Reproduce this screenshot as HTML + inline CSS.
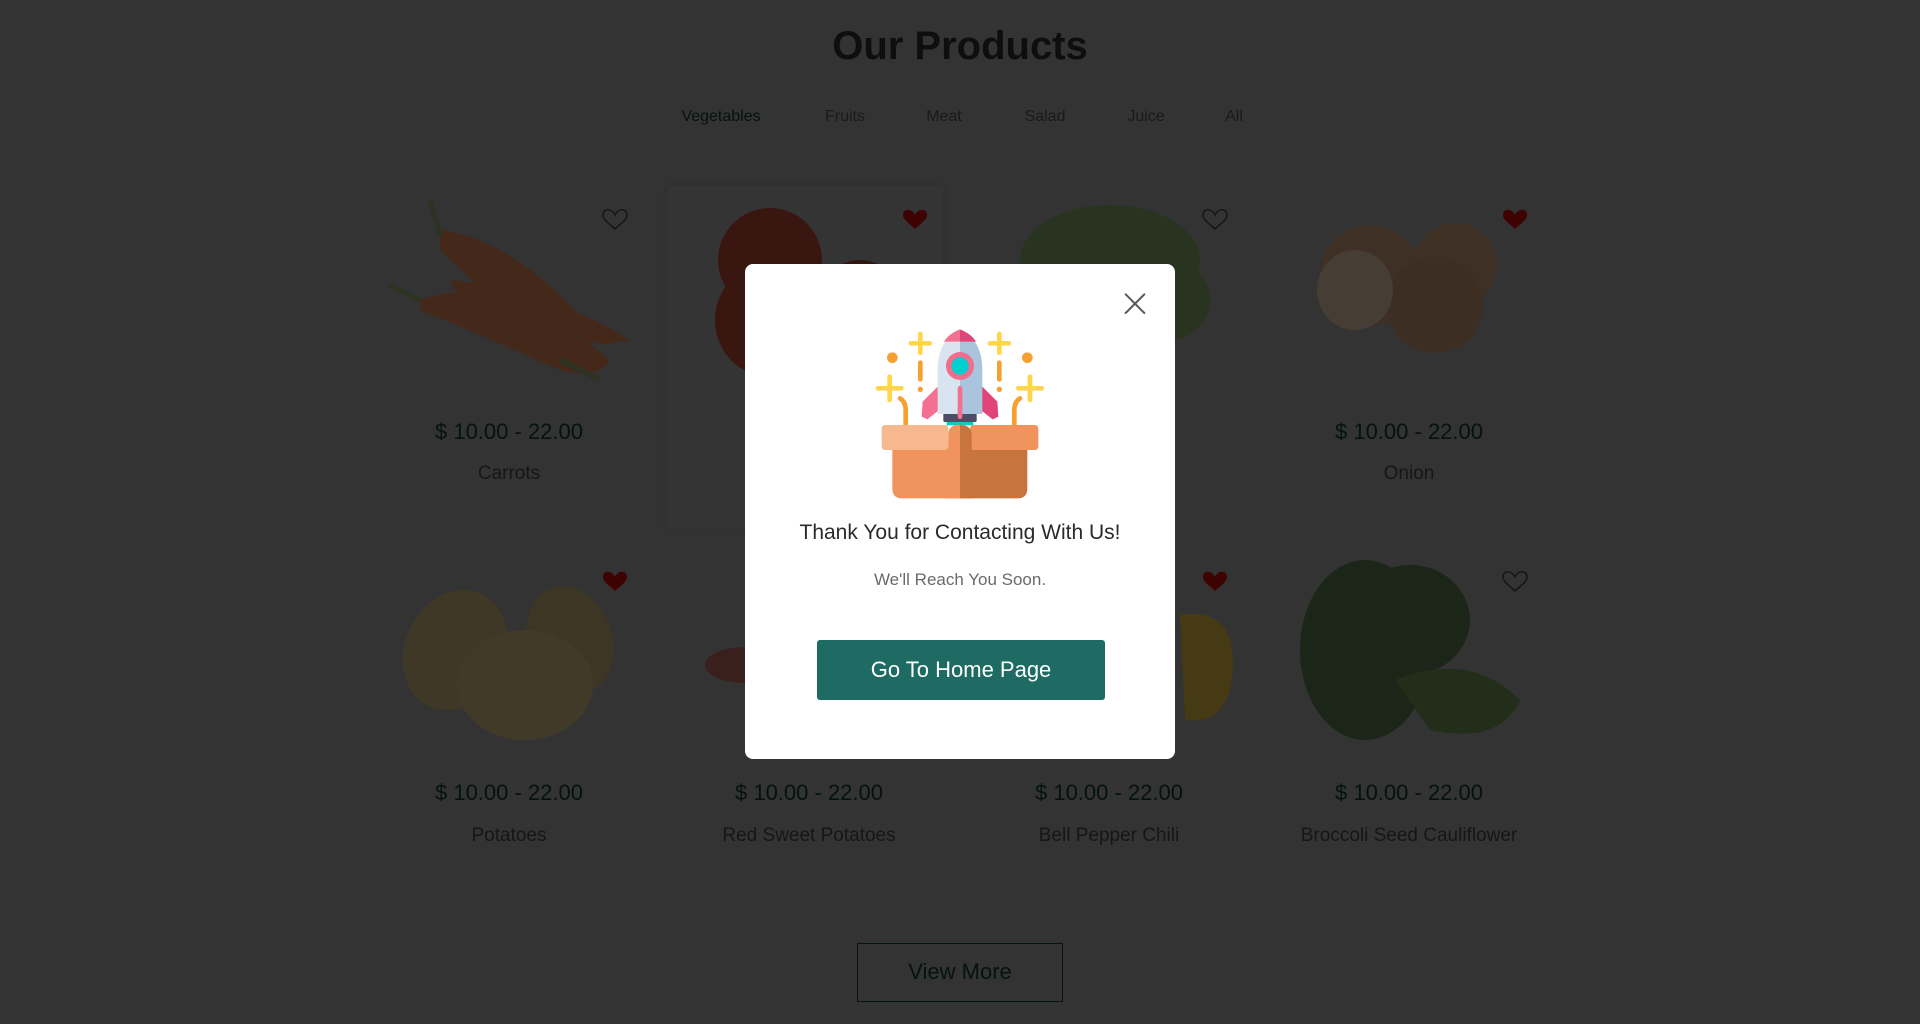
<!DOCTYPE html>
<html><head><meta charset="utf-8"><style>
*{margin:0;padding:0;box-sizing:border-box}
body{width:1920px;height:1024px;overflow:hidden;background:#333;font-family:"Liberation Sans",sans-serif;position:relative}
.a{position:absolute}
.t{position:absolute;white-space:nowrap;transform:translateX(-50%)}
.price{font-size:22px;color:#041210}
.name{font-size:19px;color:#161616}
.tab{font-size:16px;color:#1a1a1a;top:108px}
</style></head><body>
<div class="t" style="left:960px;top:24px;font-size:40px;font-weight:bold;color:#0e0e0e">Our Products</div>
<div class="t tab" style="left:721px;color:#041210">Vegetables</div>
<div class="t tab" style="left:845px">Fruits</div>
<div class="t tab" style="left:944px">Meat</div>
<div class="t tab" style="left:1045px">Salad</div>
<div class="t tab" style="left:1146px">Juice</div>
<div class="t tab" style="left:1234px">All</div>

<div class="a" style="left:667px;top:186px;width:276px;height:343px;background:#343434;box-shadow:0 0 6px rgba(0,0,0,.12)"></div>

<svg class="a" style="left:0;top:0" width="1920" height="1024">
<defs><path id="h" d="M0,6 C-3,-1 -12,-1 -12,6 C-12,11 -5,15 0,20 C5,15 12,11 12,6 C12,-1 3,-1 0,6Z"/></defs>
<g fill="#44281a"><path d="M420,300 Q500,270 610,360 Q600,380 560,370 Q470,330 420,310Z"/><path d="M440,230 Q520,240 600,340 L560,350 Q480,290 440,250Z"/><path d="M450,280 Q550,290 630,340 L600,345 Q520,300 460,300Z"/></g>
<g stroke="#2c3322" stroke-width="5"><line x1="440" y1="235" x2="430" y2="200"/><line x1="420" y1="300" x2="390" y2="285"/><line x1="560" y1="360" x2="600" y2="380"/></g>
<circle cx="770" cy="260" r="52" fill="#3a1610"/><ellipse cx="765" cy="320" rx="50" ry="55" fill="#3a1610"/><circle cx="860" cy="300" r="40" fill="#321410"/>
<ellipse cx="1110" cy="260" rx="90" ry="55" fill="#283420"/><ellipse cx="1170" cy="300" rx="40" ry="40" fill="#283420"/>
<circle cx="1370" cy="275" r="50" fill="#3e3024"/><circle cx="1455" cy="265" r="42" fill="#3e3024"/><circle cx="1435" cy="305" r="48" fill="#3c2e22"/><ellipse cx="1355" cy="290" rx="38" ry="40" fill="#463e34"/>
<ellipse cx="455" cy="650" rx="50" ry="62" fill="#3f3826" transform="rotate(25 455 650)"/><ellipse cx="570" cy="640" rx="42" ry="55" fill="#3d3624" transform="rotate(-20 570 640)"/><ellipse cx="525" cy="685" rx="68" ry="55" fill="#413a28"/>
<ellipse cx="745" cy="665" rx="40" ry="18" fill="#3a201c"/>
<path d="M1180,615 Q1240,605 1232,680 Q1225,725 1185,720 Z" fill="#453a14"/>
<ellipse cx="1365" cy="650" rx="65" ry="90" fill="#1c2618"/><ellipse cx="1410" cy="620" rx="60" ry="55" fill="#1c2618"/><path d="M1395,680 Q1470,650 1520,700 Q1500,745 1430,730 Z" fill="#222e1a"/>
<g fill="none" stroke="#161616" stroke-width="1.5"><use href="#h" x="615" y="209"/><use href="#h" x="1215" y="209"/><use href="#h" x="1515" y="571"/></g>
<g fill="#3e0202"><use href="#h" x="915" y="209"/><use href="#h" x="1515" y="209"/><use href="#h" x="615" y="571"/><use href="#h" x="1215" y="571"/></g>
</svg>

<div class="t price" style="left:509px;top:419px">$ 10.00 - 22.00</div>
<div class="t price" style="left:1409px;top:419px">$ 10.00 - 22.00</div>
<div class="t name" style="left:509px;top:463px">Carrots</div>
<div class="t name" style="left:1409px;top:463px">Onion</div>
<div class="t price" style="left:509px;top:780px">$ 10.00 - 22.00</div>
<div class="t price" style="left:809px;top:780px">$ 10.00 - 22.00</div>
<div class="t price" style="left:1109px;top:780px">$ 10.00 - 22.00</div>
<div class="t price" style="left:1409px;top:780px">$ 10.00 - 22.00</div>
<div class="t name" style="left:509px;top:825px">Potatoes</div>
<div class="t name" style="left:809px;top:825px">Red Sweet Potatoes</div>
<div class="t name" style="left:1109px;top:825px">Bell Pepper Chili</div>
<div class="t name" style="left:1409px;top:825px">Broccoli Seed Cauliflower</div>

<div class="a" style="left:857px;top:943px;width:206px;height:59px;border:1.5px solid #041210;color:#041210;font-size:22px;text-align:center;line-height:56px">View More</div>

<div class="a" style="left:745px;top:264px;width:430px;height:495px;background:#fff;border-radius:8px">
<svg class="a" style="left:-5px;top:-4px" width="440" height="500" viewBox="0 0 1320 1500">
<g stroke="#5a5a5a" stroke-width="6" stroke-linecap="round"><line x1="1157" y1="103" x2="1213" y2="159"/><line x1="1213" y1="103" x2="1157" y2="159"/></g>
<g fill="none" stroke="#f5a030" stroke-width="14" stroke-linecap="round"><path d="M497,492 V450 Q497,425 480,415"/><path d="M823,492 V450 Q823,425 840,415"/><line x1="541" y1="308" x2="541" y2="358"/><line x1="778" y1="308" x2="778" y2="358"/></g>
<g fill="#f5a030"><circle cx="541" cy="388" r="8"/><circle cx="778" cy="388" r="8"/><circle cx="457" cy="293" r="16"/><circle cx="862" cy="293" r="16"/></g>
<g stroke="#ffd54a" stroke-width="14" stroke-linecap="round"><line x1="541" y1="222" x2="541" y2="278"/><line x1="513" y1="250" x2="569" y2="250"/><line x1="778" y1="222" x2="778" y2="278"/><line x1="750" y1="250" x2="806" y2="250"/><line x1="449" y1="350" x2="449" y2="420"/><line x1="414" y1="385" x2="484" y2="385"/><line x1="870" y1="350" x2="870" y2="420"/><line x1="835" y1="385" x2="905" y2="385"/></g>
<path d="M593,380 L548,425 L545,470 L562,478 L600,448Z" fill="#f47090"/>
<path d="M727,380 L772,425 L775,470 L758,478 L720,448Z" fill="#e04478"/>
<rect x="620" y="480" width="80" height="16" fill="#1cc7c1"/>
<rect x="610" y="460" width="100" height="26" rx="4" fill="#4a4f63"/>
<path d="M660,208 Q593,240 593,330 V462 H660Z" fill="#d8e5f0"/>
<path d="M660,208 Q727,240 727,330 V462 H660Z" fill="#a9c4dc"/>
<path d="M660,208 Q625,222 612,245 H660Z" fill="#f47090"/>
<path d="M660,208 Q695,222 708,245 H660Z" fill="#e04478"/>
<circle cx="660" cy="318" r="42" fill="#f06d8e"/><circle cx="660" cy="318" r="26" fill="#00d0d0"/>
<line x1="660" y1="385" x2="660" y2="470" stroke="#f47090" stroke-width="14" stroke-linecap="round"/>
<path d="M457,560 H660 V715 H487 Q457,715 457,685Z" fill="#f0935c"/>
<path d="M660,560 H862 V685 Q862,715 832,715 H660Z" fill="#c8743e"/>
<rect x="425" y="495" width="200" height="75" rx="10" fill="#f8b88f"/>
<rect x="690" y="495" width="205" height="75" rx="10" fill="#f0935c"/>
<path d="M625,715 V525 Q625,495 655,495 H660 V715Z" fill="#f0935c"/>
<path d="M660,495 Q695,495 695,525 V715 H660Z" fill="#c8743e"/>
</svg>
<div class="t" style="left:215px;top:257px;font-size:21px;color:#2a2a2a">Thank You for Contacting With Us!</div>
<div class="t" style="left:215px;top:306px;font-size:17px;color:#6a6a6a">We'll Reach You Soon.</div>
<div class="a" style="left:72px;top:376px;width:288px;height:60px;background:#1d6b62;border-radius:3px;color:#fff;font-size:22px;text-align:center;line-height:60px">Go To Home Page</div>
</div>
</body></html>
